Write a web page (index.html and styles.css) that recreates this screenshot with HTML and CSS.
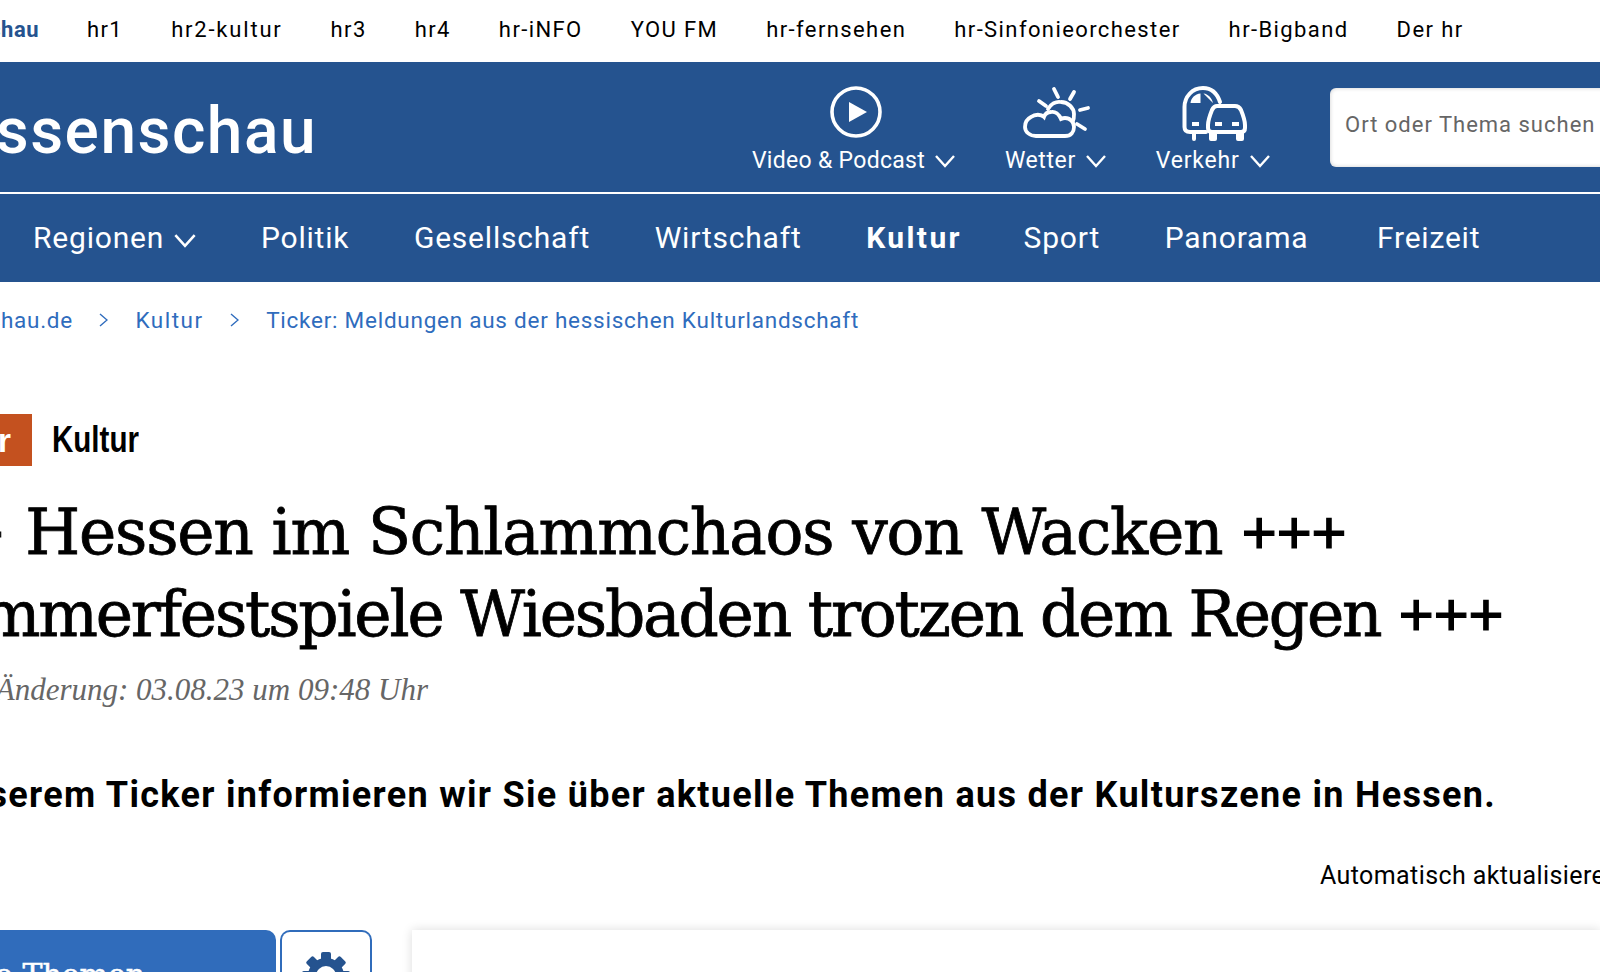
FILE: index.html
```html
<!DOCTYPE html>
<html lang="de">
<head>
    <meta charset="UTF-8">
    <title>Ticker: Meldungen aus der hessischen Kulturlandschaft</title>
    <link rel="stylesheet" href="styles.css">
</head>
<body>
    <!-- Senderleiste -->
    <nav class="topbar">
        <a class="topbar-first" href="#"><b>hessenschau</b></a>
        <a href="#">hr1</a>
        <a class="topbar-wide" href="#">hr2-kultur</a>
        <a href="#">hr3</a>
        <a href="#">hr4</a>
        <a href="#">hr-iNFO</a>
        <a href="#">YOU FM</a>
        <a href="#">hr-fernsehen</a>
        <a href="#">hr-Sinfonieorchester</a>
        <a href="#">hr-Bigband</a>
        <a href="#">Der hr</a>
    </nav>

    <header class="header">
        <div class="logo"><span>hessenschau</span></div>
        <a class="service service-video" href="#">
            <svg class="service-icon icon-play" width="60" height="58" viewBox="0 0 60 58">
                <circle cx="30" cy="28" r="24" fill="none" stroke="#fff" stroke-width="3.6"/>
                <path d="M23 18 L41 28 L23 38 Z" fill="#fff"/>
            </svg>
            <span class="service-label">Video &amp; Podcast <svg class="chevron" width="20" height="14" viewBox="0 0 20 14"><path d="M1 2 L10 12 L19 2"/></svg></span>
        </a>
        <a class="service service-wetter" href="#">
            <svg class="service-icon" width="70" height="58" viewBox="0 0 70 58">
                <g fill="none" stroke="#fff" stroke-width="3.8" stroke-linecap="round" transform="translate(0 2)">
                    <path d="M15 50 H44 C50 50 53 46 53 41 C53 36 49 32 44 32 C42 32 41 32.500 40 33 C38 28 34 25 30 26 C27 26 24 28 23 31 C20 28 14 28 10 31 C6 33 4 37 4 41 C4 46 9 50 15 50 Z"/>
                    <path d="M27 23 C30 18 35 15 40 16 C47 16 53 22 53 28 C53 31 53 33 52 35"/>
                    <path d="M33 3 L37 11 M53 6 L49 13 M18 15 L25 20 M67 22 L59 24 M64 43 L56 38"/>
                </g>
            </svg>
            <span class="service-label">Wetter <svg class="chevron" width="20" height="14" viewBox="0 0 20 14"><path d="M1 2 L10 12 L19 2"/></svg></span>
        </a>
        <a class="service service-verkehr" href="#">
            <svg class="service-icon icon-traffic" width="70" height="58" viewBox="0 0 70 58">
                <g fill="none" stroke="#fff" stroke-width="4" stroke-linecap="round" stroke-linejoin="round">
                    <path d="M26 48 H10 Q4.500 48 4.500 43 V23 C4.500 13 12 4 23 4 C31 4 37 9 40 18"/>
                    <path d="M14 48 V55"/>
                    <path d="M37 22 H55 C58 22 60 24 61 26 C63 31 65 36 65 41 V44 C65 47 63 48 61 48 H32 C30 48 28 47 28 44 V41 C28 36 30 31 32 26 C33 24 34 22 37 22 Z"/>
                </g>
                <path d="M10.500 19 C11 14 15 10 20.500 9.500 V19 Z M23.500 9.500 C28 10 32 14 33 19 Z" fill="#fff"/>
                <path d="M12 38 H19 V42 H12 Z M35 38 H42 V42 H35 Z M52 38 H59 V42 H52 Z" fill="#fff"/>
                <path d="M29 48 H37 V55 Q37 57 35 57 H31 Q29 57 29 55 Z M56 48 H64 V55 Q64 57 62 57 H58 Q56 57 56 55 Z" fill="#fff"/>
            </svg>
            <span class="service-label">Verkehr <svg class="chevron" width="20" height="14" viewBox="0 0 20 14"><path d="M1 2 L10 12 L19 2"/></svg></span>
        </a>
        <div class="search">Ort oder Thema suchen</div>
    </header>

    <nav class="mainnav">
        <a class="nav-regionen" href="#">Regionen <svg class="chevron" width="22" height="15" viewBox="0 0 20 14"><path d="M1 2 L10 12 L19 2"/></svg></a>
        <a href="#">Politik</a>
        <a href="#">Gesellschaft</a>
        <a href="#">Wirtschaft</a>
        <a class="active" href="#">Kultur</a>
        <a href="#">Sport</a>
        <a href="#">Panorama</a>
        <a class="nav-last" href="#">Freizeit</a>
    </nav>

    <div class="breadcrumb">
        <a class="crumb-first" href="#"><span>hessenschau.de</span></a>
        <svg class="sep" width="9" height="14" viewBox="0 0 9 14"><path d="M1 1 L8 7 L1 13"/></svg>
        <a class="crumb-kultur" href="#">Kultur</a>
        <svg class="sep" width="9" height="14" viewBox="0 0 9 14"><path d="M1 1 L8 7 L1 13"/></svg>
        <a href="#">Ticker: Meldungen aus der hessischen Kulturlandschaft</a>
    </div>

    <div class="topic">
        <div class="topic-tag"><span>Kultur</span></div>
        <span class="topic-name">Kultur</span>
    </div>

    <h1 class="headline">
        <span class="line line-1"><span>+++ Hessen im Schlammchaos von Wacken <span class="plus">+++</span></span></span>
        <span class="line line-2"><span>Sommerfestspiele Wiesbaden trotzen dem Regen <span class="plus">+++</span></span></span>
    </h1>

    <div class="date"><span>Letzte Änderung: 03.08.23 um 09:48 Uhr</span></div>

    <p class="lead"><span>In unserem Ticker informieren wir Sie über aktuelle Themen aus der Kulturszene in Hessen.</span></p>

    <div class="refresh">Automatisch aktualisieren</div>

    <div class="ticker">
        <div class="filter"><span>Alle Themen</span></div>
        <div class="settings">
            <svg width="48" height="48" viewBox="0 0 48 48">
                <g fill="#25538f">
                    <rect x="19" y="0" width="10" height="48" rx="2"/>
                    <rect x="19" y="0" width="10" height="48" rx="2" transform="rotate(45 24 24)"/>
                    <rect x="19" y="0" width="10" height="48" rx="2" transform="rotate(90 24 24)"/>
                    <rect x="19" y="0" width="10" height="48" rx="2" transform="rotate(135 24 24)"/>
                    <circle cx="24" cy="24" r="18"/>
                </g>
                <circle cx="24" cy="24" r="10" fill="#fff"/>
            </svg>
        </div>
        <div class="card"></div>
    </div>
</body>
</html>
```

FILE: styles.css
```css
body {
    margin: 0;
    height: 972px;
    overflow: hidden;
    background: #fff;
    font-family: Roboto, "Liberation Sans", sans-serif;
    color: #000;
}
a {
    color: inherit;
    text-decoration: none;
}

/* Senderleiste */
.topbar {
    height: 58px;
    padding-bottom: 4px;
    display: flex;
    align-items: center;
    gap: 48px;
    font-size: 22px;
    letter-spacing: 1.4px;
}
.topbar-first {
    width: 39px;
    display: flex;
    justify-content: flex-end;
    color: #25538f;
    letter-spacing: 0.5px;
}
.topbar-wide {
    letter-spacing: 1.8px;
}

/* Kopf */
.header {
    height: 130px;
    background: #25538f;
    border-bottom: 2px solid #fff;
    display: flex;
    color: #fff;
}
.header > * {
    flex: none;
}
.logo {
    width: 317px;
    margin-right: 435px;
    box-sizing: border-box;
    padding-top: 8px;
    display: flex;
    justify-content: flex-end;
    align-items: center;
    font-size: 64px;
    font-weight: 500;
    letter-spacing: 1.5px;
}
.service {
    display: flex;
    flex-direction: column;
    align-items: center;
    padding-top: 22px;
    font-size: 23px;
    letter-spacing: 0.3px;
}
.service-icon {
    flex: none;
}
.icon-play {
    margin-left: 5px;
}
.icon-traffic {
    margin-left: 4px;
}
.service-video {
    width: 203px;
    margin-right: 50px;
}
.service-wetter {
    width: 101px;
    margin-right: 49px;
    letter-spacing: 0.6px;
}
.service-verkehr {
    width: 116px;
    margin-right: 59px;
    letter-spacing: 0.8px;
}
.service-label {
    white-space: nowrap;
    line-height: 28px;
    margin-top: 5px;
}
.chevron {
    fill: none;
    stroke: #fff;
    stroke-width: 2.4;
    margin-left: 4px;
}
.search {
    width: 300px;
    height: 79px;
    margin-top: 26px;
    background: #fff;
    border-radius: 6px;
    box-sizing: border-box;
    padding: 24px 15px;
    color: #666;
    font-size: 22px;
    letter-spacing: 1px;
    white-space: nowrap;
    box-shadow: inset 0 0 4px rgba(0, 0, 0, 0.2);
}

/* Hauptnavigation */
.mainnav {
    height: 86px;
    padding-bottom: 2px;
    background: #25538f;
    color: #fff;
    display: flex;
    align-items: center;
    gap: 64.600px;
    padding-left: 33px;
    font-size: 30px;
    letter-spacing: 0.8px;
}
.nav-regionen .chevron {
    margin-left: 2px;
}
.mainnav .active {
    font-weight: 700;
    letter-spacing: 2.4px;
    margin-right: -3px;
}
.mainnav .nav-last {
    margin-left: 4px;
}

.breadcrumb {
    height: 76px;
    display: flex;
    align-items: center;
    gap: 26px;
    color: #2f6cbd;
    font-size: 22.500px;
    letter-spacing: 0.75px;
}
.crumb-first {
    width: 73px;
    display: flex;
    justify-content: flex-end;
    white-space: nowrap;
}
.crumb-kultur {
    letter-spacing: 1.5px;
}
.sep {
    fill: none;
    stroke: #2f6cbd;
    stroke-width: 1.4;
    margin-right: 1.500px;
}

.topic {
    margin-top: 56px;
    height: 52px;
    display: flex;
    align-items: center;
    gap: 20px;
    font-family: "Liberation Sans", sans-serif;
    font-weight: 700;
}
.topic-tag {
    width: 32px;
    height: 52px;
    background: #c4511f;
    color: #fff;
    display: flex;
    justify-content: flex-end;
    align-items: center;
    font-size: 34px;
}
.topic-tag span {
    margin-right: 21px;
}
.topic-name {
    font-size: 36px;
    transform: scaleX(0.82);
    transform-origin: left;
}

.headline {
    margin: 26px 0 0;
    font-family: "DejaVu Serif", serif;
    font-weight: 400;
    font-size: 63px;
    line-height: 82px;
    -webkit-text-stroke: 0.8px #000;
}
.line {
    display: flex;
    justify-content: flex-end;
    white-space: nowrap;
}
.line-1 {
    width: 1346px;
    letter-spacing: -1.2px;
}
.line-2 {
    width: 1503px;
    letter-spacing: -2.200px;
}
.plus {
    font-family: "Liberation Serif", serif;
    font-weight: 700;
    letter-spacing: -1px;
    -webkit-text-stroke: 1.2px #000;
}

.date {
    width: 428px;
    margin-top: 16px;
    display: flex;
    justify-content: flex-end;
    white-space: nowrap;
    font-family: "Liberation Serif", serif;
    font-style: italic;
    font-size: 31px;
    color: #666;
}

.lead {
    width: 1496px;
    margin: 66px 0 0;
    display: flex;
    justify-content: flex-end;
    white-space: nowrap;
    font-weight: 700;
    font-size: 36px;
    letter-spacing: 1.3px;
}

.refresh {
    margin-top: 45px;
    margin-left: 1320px;
    white-space: nowrap;
    font-size: 25px;
    letter-spacing: 0.4px;
}

/* Ticker */
.ticker {
    margin-top: 40px;
    display: flex;
}
.filter {
    width: 276px;
    height: 80px;
    background: #306cbb;
    border-radius: 0 10px 0 0;
    color: #fff;
    box-sizing: border-box;
    padding-top: 27px;
    display: flex;
    justify-content: flex-end;
    font-family: "DejaVu Serif", serif;
    font-size: 30px;
    -webkit-text-stroke: 0.5px #fff;
}
.filter span {
    margin-right: 131px;
    white-space: nowrap;
}
.settings {
    width: 92px;
    height: 80px;
    margin-left: 4px;
    border: 2px solid #306cbb;
    border-bottom: none;
    border-radius: 10px 10px 0 0;
    box-sizing: border-box;
    display: flex;
    justify-content: center;
    padding-top: 20px;
}
.card {
    flex: 1;
    height: 80px;
    margin-left: 40px;
    box-shadow: 0 0 10px rgba(0, 0, 0, 0.14);
}
```
